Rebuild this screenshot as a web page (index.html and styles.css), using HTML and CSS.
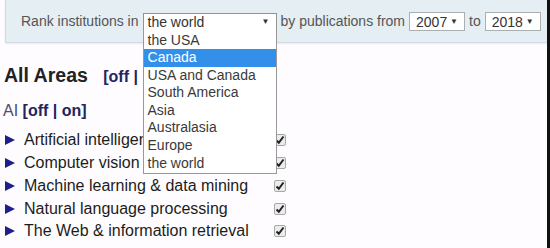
FILE: index.html
```html
<!DOCTYPE html>
<html>
<head>
    <title>Rank institutions</title>
    <meta charset="UTF-8">
    <link rel="stylesheet" href="styles.css">
</head>
<body>
<div class="page">
    <div class="filter_bar">
        <span>Rank institutions in</span>
        <div class="sel sel_region">
            <span>the world</span><i>&#9660;</i>
            <ul class="sel_menu">
                <li>the USA</li>
                <li class="hover">Canada</li>
                <li>USA and Canada</li>
                <li>South America</li>
                <li>Asia</li>
                <li>Australasia</li>
                <li>Europe</li>
                <li>the world</li>
            </ul>
        </div>
        <span>by publications from</span>
        <div class="sel sel_year"><span>2007</span><i>&#9660;</i></div>
        <span>to</span>
        <div class="sel sel_year"><span>2018</span><i>&#9660;</i></div>
    </div>

    <h2 class="areas">All Areas <a class="toggle">[off |</a></h2>
    <div class="sub">AI <a class="toggle">[off | on]</a></div>

    <ul class="topics">
        <li><b class="tri"></b><span>Artificial intelligence</span><em class="chk"><svg width="10" height="10" viewBox="0 0 10 10"><path d="M1.5 5.5 L3.8 7.8 L8.5 1.5" fill="none" stroke="#222" stroke-width="2"/></svg></em></li>
        <li><b class="tri"></b><span>Computer vision</span><em class="chk"><svg width="10" height="10" viewBox="0 0 10 10"><path d="M1.5 5.5 L3.8 7.8 L8.5 1.5" fill="none" stroke="#222" stroke-width="2"/></svg></em></li>
        <li><b class="tri"></b><span>Machine learning &amp; data mining</span><em class="chk"><svg width="10" height="10" viewBox="0 0 10 10"><path d="M1.5 5.5 L3.8 7.8 L8.5 1.5" fill="none" stroke="#222" stroke-width="2"/></svg></em></li>
        <li><b class="tri"></b><span>Natural language processing</span><em class="chk"><svg width="10" height="10" viewBox="0 0 10 10"><path d="M1.5 5.5 L3.8 7.8 L8.5 1.5" fill="none" stroke="#222" stroke-width="2"/></svg></em></li>
        <li><b class="tri"></b><span>The Web &amp; information retrieval</span><em class="chk"><svg width="10" height="10" viewBox="0 0 10 10"><path d="M1.5 5.5 L3.8 7.8 L8.5 1.5" fill="none" stroke="#222" stroke-width="2"/></svg></em></li>
    </ul>
</div>
</body>
</html>
```

FILE: styles.css
```css
body{
    margin: 0;
    background: #111;
    font-family: "Liberation Sans", Arial, sans-serif;
}
.page{
    width: 547px;
    height: 248px;
    background: #fefcfe;
    overflow: hidden;
}
.filter_bar{
    margin-left: 5px;
    height: 42px;
    padding-left: 15px;
    display: flex;
    align-items: center;
    gap: 4px;
    background: #e4eef3;
    border-left: 1px solid #cddbe3;
    border-bottom: 1px solid #cddbe3;
    box-shadow: 0 1px 2px rgba(0,0,0,.08);
    font-size: 14px;
    color: #555;
}
.sel{
    position: relative;
    height: 19px;
    box-sizing: border-box;
    border: 1px solid #a9b0b4;
    background: #fff;
    color: #333;
    display: flex;
    align-items: center;
    justify-content: space-between;
    padding: 0 6px 0 4px;
}
.sel i{
    font-style: normal;
    font-size: 8px;
    color: #333;
}
.sel_region{
    width: 134px;
    margin-top: 2px;
    border-color: #8e959a;
    border-bottom: 2px solid #222;
}
.sel_year{
    width: 56px;
    padding-left: 6px;
    margin-top: 1px;
}
.sel_menu{
    position: absolute;
    top: 100%;
    left: -1px;
    width: 134px;
    box-sizing: border-box;
    margin: 0;
    padding: 2px 0 1px;
    list-style: none;
    background: #fff;
    border: 1px solid #999;
    border-top: none;
    z-index: 2;
}
.sel_menu li{
    height: 17.6px;
    line-height: 17.6px;
    padding-left: 4px;
    color: #3a3a3a;
}
.sel_menu li.hover{
    background: #3390ea;
    color: #fff;
}
.areas{
    margin: 20px 0 0 4px;
    font-size: 19.5px;
    line-height: 24px;
    color: #222;
}
.toggle{
    font-size: 16px;
    color: #23235e;
    margin-left: 10px;
}
.sub{
    margin: 12px 0 0 3px;
    font-size: 16px;
    line-height: 20px;
    color: #4c4c6c;
}
.sub .toggle{
    margin-left: 0;
    font-weight: bold;
}
.topics{
    list-style: none;
    margin: 8px 0 0 5px;
    padding: 0;
}
.topics li{
    display: grid;
    grid-template-columns: 19px 250px 12px;
    align-items: center;
    height: 22.75px;
    font-size: 16px;
    color: #1c1c1c;
}
.tri{
    width: 0;
    height: 0;
    border-left: 10px solid #1e1e8c;
    border-top: 5px solid transparent;
    border-bottom: 5px solid transparent;
}
.chk{
    width: 12px;
    height: 12px;
    box-sizing: border-box;
    border: 1px solid #a8a8a8;
    border-radius: 2px;
    background: #ececec;
    display: flex;
    align-items: center;
    justify-content: center;
}
```
